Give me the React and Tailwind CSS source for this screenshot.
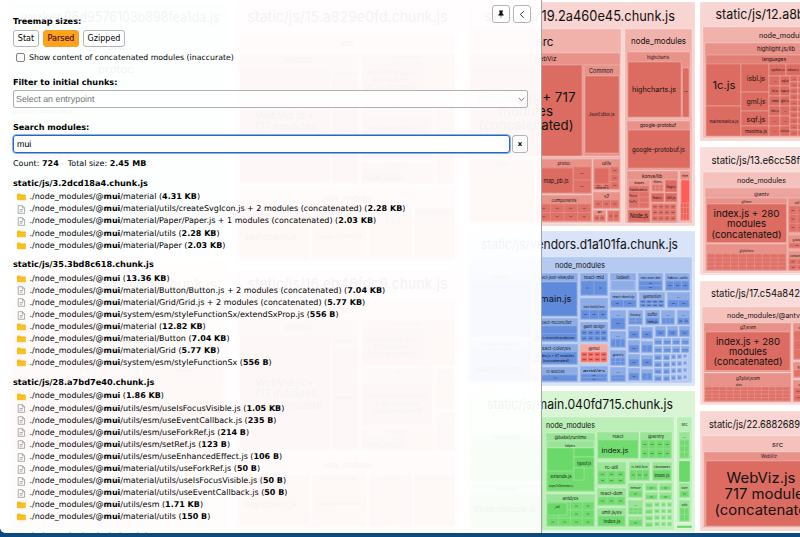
import React from 'react';

const RED = ['#f8d5d2', '#f1b2ac', '#e8928a', '#dc6c61'];
const PINK = ['#f9dcda', '#f5c1bd', '#eda39d', '#dc6c61'];
const BLUE = ['#d9e3f9', '#b5c9f1', '#8eace6', '#5f89da'];
const GREEN = ['#daf5d6', '#bceeb7', '#9ae497', '#6ad969'];
const TEAL = ['#d8f3ea', '#c8eee4', '#b4e6da', '#a0dfd0'];

const Box = ({ f, x2, y2, x, y }) => (
  <rect x={x} y={y} width={x2 - x} height={y2 - y} fill={f} stroke="#ffffff" strokeOpacity="0.3" strokeWidth="0.8" />
);

const Label = ({ x, y, s, w, start, children }) => (
  <text
    x={x}
    y={y}
    fontSize={s}
    textAnchor={start ? 'start' : 'middle'}
    textLength={w}
    lengthAdjust="spacingAndGlyphs"
    fill="#111"
  >
    {children}
  </text>
);

// A package with a small caption and a grid of leaf modules below it.
const Pack = ({ pal, x, y, x2, y2, label, w, s = 4, head = 8, cols = 2, rows = 1, dots = true }) => {
  const cells = [];
  const cw = (x2 - x - 2) / cols;
  const ch = (y2 - y - head - 1) / rows;
  for (let r = 0; r < rows; r++) {
    for (let c = 0; c < cols; c++) {
      const cx = x + 1 + c * cw;
      const cy = y + head + r * ch;
      cells.push(
        <g key={r + '-' + c}>
          <rect x={cx + 0.3} y={cy + 0.3} width={cw - 0.7} height={ch - 0.7} fill={pal[3]} opacity="0.85" />
          {dots && cw > 5 && ch > 3 && (
            <rect x={cx + cw / 2 - 1.5} y={cy + ch / 2 - 0.3} width="3" height="0.6" fill="#000" opacity="0.5" />
          )}
        </g>
      );
    }
  }
  return (
    <g>
      <Box f={pal[2]} x={x} y={y} x2={x2} y2={y2} />
      {cells}
      {label && (
        <Label x={(x + x2) / 2} y={y + head - 2} s={s} w={w}>
          {label}
        </Label>
      )}
    </g>
  );
};

const Chunk15 = ({ title, dy }) => (
  <g transform={`translate(0 ${dy})`}>
    <Box f={RED[0]} x={235} y={2} x2={458} y2={263} />
    <Label x={347.5} y={22} s={15} w={200}>{title}</Label>
    <Box f={RED[1]} x={238} y={33} x2={455} y2={185} />
    <Label x={347} y={46} s={9} w={13}>src</Label>
    <Box f={RED[2]} x={239} y={53} x2={359} y2={184} />
    <Label x={299} y={63} s={8} w={29}>WebViz</Label>
    <Box f={RED[3]} x={240} y={68} x2={330} y2={183} />
    <Label x={285} y={119} s={10} w={59}>WebViz.js +</Label>
    <Label x={285} y={130} s={10} w={63}>717 modules</Label>
    <Label x={285} y={141.500} s={10} w={76}>(concatenated)</Label>
    <Box f={RED[2]} x={331} y={68} x2={358} y2={183} />
    <Label x={345} y={76} s={5} w={21}>Common</Label>
    <Box f={RED[3]} x={332} y={80} x2={358} y2={183} />
    <Label x={345} y={132} s={4} w={22}>JsonEditor.js</Label>
    <Pack pal={RED} x={361} y={53} x2={455} y2={99} label="components" w={26} cols={5} rows={2} dots={false} />
    <Box f={RED[3]} x={362} y={61} x2={424} y2={98} />
    <Label x={391} y={74.500} s={6.500} w={50}>WebvizPlay.js +</Label>
    <Label x={391} y={82} s={6.500} w={37}>43 modules</Label>
    <Label x={391} y={89} s={6.500} w={49}>(concatenated)</Label>
    <Box f={RED[2]} x={361} y={101} x2={433} y2={160} />
    <Label x={397} y={107} s={4} w={6}>ui</Label>
    <Box f={RED[3]} x={362} y={115} x2={432} y2={158} />
    <Label x={397} y={131} s={6.500} w={59}>esGeneralPanel.js</Label>
    <Label x={397} y={138.500} s={6.500} w={43}>+ 60 modules</Label>
    <Label x={397} y={146} s={6.500} w={49}>(concatenated)</Label>
    <Pack pal={RED} x={436} y={101} x2={455} y2={143} label="utils" cols={2} rows={4} />
    <Pack pal={RED} x={436} y={145} x2={455} y2={184} label="v2" cols={2} rows={3} />
    <Pack pal={RED} x={361} y={161} x2={433} y2={184} label="protoc" w={13} cols={4} dots={false} />
    <Box f={RED[3]} x={362} y={169} x2={406} y2={183} />
    <Label x={384} y={180} s={7} w={35}>map_pb.js</Label>
    <Box f={RED[1]} x={238} y={188} x2={455} y2={261} />
    <Label x={347} y={201} s={7.500} w={49}>node_modules</Label>
    <Pack pal={RED} x={239} y={207} x2={310} y2={259} label="highcharts" cols={1} dots={false} />
    <Label x={271} y={239.500} s={7.500} w={51}>highcharts.js</Label>
    <Pack pal={RED} x={312} y={207} x2={367} y2={259} label="google-protobuf" w={35} cols={1} dots={false} />
    <Label x={340} y={238} s={5} w={43}>google-protobuf.js</Label>
    <Pack pal={RED} x={369} y={207} x2={412} y2={259} label="konva/lib" w={18} cols={3} rows={5} />
    <Pack pal={RED} x={414} y={207} x2={455} y2={259} label="@material-ui/core" w={32} cols={3} rows={4} />
  </g>
);

const Treemap = () => (
  <svg width="800" height="532" viewBox="0 0 800 532" className="block" fontFamily='Inter, "Liberation Sans", sans-serif'>
    <Box f={TEAL[0]} x={8} y={2} x2={227} y2={252} />
    <Label x={120} y={22} s={14} w={199}>worker.95d9576103b898fea1da.js</Label>
    <Box f={TEAL[1]} x={11} y={31} x2={224} y2={249} />
    <Label x={116} y={50} s={11} w={18}>src</Label>
    <Label x={116} y={73} s={10} w={36}>protoc</Label>
    <Label x={43} y={88} s={5} w={24}>planning</Label>
    <Label x={104} y={97} s={5} w={20}>hmi_pb.js</Label>
    <Label x={174} y={97} s={5} w={27}>map_pb.js</Label>
    <Label x={43} y={113} s={5} w={60}>planning_debug_pb.js</Label>
    <Label x={42} y={158} s={5} w={58}>perception_pb.js</Label>

    <Box f={PINK[0]} x={8} y={260} x2={228} y2={530} />
    <Label x={116} y={289} s={14} w={202}>static/js/14.28da4cca.chunk.js</Label>
    <Box f={PINK[1]} x={11} y={300} x2={225} y2={528} />
    <Box f={PINK[2]} x={13} y={322} x2={140} y2={452} />
    <Label x={78} y={402} s={10} w={76}>(concatenated)</Label>
    <Pack pal={RED} x={143} y={366} x2={223} y2={450} label="components" cols={4} rows={5} />
    <Label x={116} y={470} s={7.500} w={49}>node_modules</Label>

    <Chunk15 title="static/js/15.a829e0fd.chunk.js" dy={0} />
    <Chunk15 title="static/js/16.eb46fdc9.chunk.js" dy={267} />

    <Box f={RED[0]} x={466} y={2} x2={695} y2={226} />
    <Label start x={484} y={20.500} s={14} w={56}>static/js/</Label>
    <Label start x={541.500} y={20.500} s={14} w={133.500}>19.2a460e45.chunk.js</Label>
    <Box f={RED[1]} x={469} y={29} x2={621} y2={223} />
    <Label x={545} y={45.500} s={11} w={17}>src</Label>
    <Box f={RED[2]} x={470} y={53} x2={620} y2={156} />
    <Label x={545} y={61} s={6.500} w={23}>WebViz</Label>
    <Box f={RED[3]} x={470} y={65} x2={582} y2={156} />
    <Label x={526} y={102} s={13} w={99}>WebViz.js + 717</Label>
    <Label x={526} y={116} s={13} w={54}>modules</Label>
    <Label x={526} y={129.500} s={13} w={95}>(concatenated)</Label>
    <Box f={RED[2]} x={584} y={65} x2={620} y2={156} />
    <Label x={601} y={72.800} s={6} w={24}>Common</Label>
    <Box f={RED[3]} x={585} y={76} x2={619} y2={153} />
    <Label x={601.500} y={116} s={4.200} w={26}>JsonEditor.js</Label>
    <Pack pal={RED} x={470} y={159} x2={535} y2={222} label="panels" cols={3} rows={4} />
    <Pack pal={RED} x={536} y={159} x2={592} y2={194} label="protoc" w={13} s={4.500} cols={3} rows={2} />
    <Box f={RED[3]} x={537} y={168} x2={573} y2={193} />
    <Label x={556} y={183} s={6} w={25}>map_pb.js</Label>
    <Pack pal={RED} x={536} y={195} x2={592} y2={222} label="components" w={25} s={4.500} head={9} cols={4} rows={2} />
    <Pack pal={RED} x={593} y={159} x2={620} y2={190} label="utils" w={9} s={4.500} cols={3} rows={3} />
    <Box f={RED[3]} x={594} y={168} x2={609} y2={184} />
    <Label x={602} y={188.500} s={3} w={13}>container.js</Label>
    <Pack pal={RED} x={593} y={192} x2={620} y2={209} label="v2" w={5} s={4.500} cols={3} />
    <Pack pal={RED} x={593} y={210} x2={606} y2={222} label="api" s={3} head={5} cols={2} />
    <Pack pal={RED} x={607} y={210} x2={620} y2={222} head={1} cols={2} />

    <Box f={RED[1]} x={625} y={29} x2={692} y2={223} />
    <Label x={658.500} y={44} s={8.500} w={55}>node_modules</Label>
    <Box f={RED[2]} x={627} y={52} x2={690} y2={118} />
    <Label x={658} y={59} s={4.500} w={22}>highcharts</Label>
    <Box f={RED[3]} x={628} y={62} x2={681} y2={117} />
    <Label x={654} y={92} s={7.200} w={44}>highcharts.js</Label>
    <Box f={RED[3]} x={682.500} y={68} x2={689} y2={117} />
    <Label x={686} y={92} s={5}>...</Label>
    <Box f={RED[2]} x={627} y={121} x2={690} y2={170} />
    <Label x={658} y={127} s={5} w={36}>google-protobuf</Label>
    <Box f={RED[3]} x={628} y={130} x2={690} y2={168} />
    <Label x={658.500} y={151.500} s={6.500} w={53}>google-protobuf.js</Label>
    <Box f={RED[2]} x={627} y={171} x2={678} y2={223} />
    <Label x={652} y={178} s={5} w={20}>konva/lib</Label>
    <Pack pal={RED} x={628} y={180} x2={650} y2={209} label="shapes" w={10} s={3} head={6} cols={2} rows={4} dots={false} />
    <Label x={638} y={190.500} s={3} w={18}>Transformer.js</Label>
    <Label x={633} y={197} s={3} w={8}>Text.js</Label>
    <Label x={633} y={203} s={3} w={8}>TextP.js</Label>
    <Box f={RED[3]} x={628} y={210} x2={650} y2={222} />
    <Label x={639} y={217.500} s={5.500} w={18}>Node.js</Label>
    <Pack pal={RED} x={651} y={180} x2={664} y2={192} label="filters" s={3} head={5} cols={3} rows={2} />
    <Box f={RED[3]} x={665} y={180} x2={677} y2={192} />
    <Label x={671} y={187.500} s={3} w={9}>Stage.js</Label>
    <Box f={RED[3]} x={651} y={193} x2={664} y2={202} />
    <Label x={657} y={198.500} s={3} w={9}>Shape.js</Label>
    <Box f={RED[3]} x={665} y={193} x2={677} y2={202} />
    <Label x={671} y={198.500} s={3.500} w={9}>Util.js</Label>
    <Pack pal={RED} x={651} y={203} x2={677} y2={222} head={1} cols={4} rows={3} />
    <Pack pal={['', '', '#ee9088', '#f5544c']} x={680} y={181} x2={690} y2={221} head={1} cols={3} rows={6} dots={false} />
    <Box f={RED[2]} x={680} y={171} x2={690} y2={180} />
    <Label x={685} y={177} s={3} w={6}>three</Label>
    <Box f="#ff5d56" x={681} y={180} x2={689.500} y2={203} />

    <Box f={BLUE[0]} x={466} y={231} x2={695} y2={386} />
    <Label x={579.500} y={249} s={13} w={197}>static/js/vendors.d1a101fa.chunk.js</Label>
    <Box f={BLUE[1]} x={468} y={257} x2={692} y2={383} />
    <Label x={580} y={268} s={7.500} w={50}>node_modules</Label>
    <Pack pal={BLUE} x={469} y={273} x2={532} y2={338} label="moment" w={13} cols={1} />
    <Pack pal={BLUE} x={469} y={340} x2={532} y2={382} label="moment-timezone" w={36} cols={1} dots={false} />
    <Label x={499} y={371.500} s={8} w={47}>latest.json</Label>
    <Box f={BLUE[2]} x={533} y={273} x2={578} y2={317} />
    <Label x={556} y={279} s={4.500} w={36}>react-json-view/dist</Label>
    <Box f={BLUE[3]} x={534} y={282} x2={577} y2={316} />
    <Label x={556} y={302} s={8.500} w={31}>main.js</Label>
    <Pack pal={BLUE} x={533} y={318} x2={578} y2={342} label="react-reconciler" w={32} s={4.500} cols={1} rows={2} dots={false} />
    <Label x={556} y={338.500} s={3} w={37}>react-reconciler.production</Label>
    <Pack pal={BLUE} x={533} y={344} x2={578} y2={365} label="react-color/es" w={30} s={4.500} cols={1} dots={false} />
    <Label x={556} y={357} s={3.500} w={36}>index.js + 47 modules</Label>
    <Label x={556} y={361.500} s={3.500} w={26}>(concatenated)</Label>
    <Pack pal={BLUE} x={533} y={367} x2={578} y2={382} label="rc-select/es" w={18} s={4} cols={1} />
    <Pack pal={BLUE} x={580} y={273} x2={608} y2={296} label="react-mid" w={20} s={4.500} cols={2} rows={1} />
    <Pack pal={BLUE} x={580} y={298} x2={608} y2={320} label="react-dnd/dist/esm" w={21} s={3.500} head={12} cols={3} rows={1} />
    <Pack pal={BLUE} x={580} y={322} x2={608} y2={342} label="@ant-design" w={21} s={4} cols={4} rows={2} />
    <Pack pal={['', '', '#f2aaa5', '#ef5a52']} x={580} y={344} x2={608} y2={363} label="@mui" w={11} s={4} cols={4} rows={2} />
    <Pack pal={BLUE} x={580} y={366} x2={608} y2={382} label="antd/es" w={22} s={3.500} cols={1} rows={2} />
    <Pack pal={BLUE} x={610} y={273} x2={636} y2={291} label="lodash" w={13} s={4.500} head={8} cols={1} dots={false} />
    <Box f={BLUE[2]} x={611} y={280.500} x2={635} y2={290} />
    <Pack pal={BLUE} x={638} y={273} x2={663} y2={291} label="react-router-dom" w={20} s={3} cols={1} rows={2} />
    <Pack pal={BLUE} x={665} y={273} x2={690} y2={291} label="fabric-utils" w={20} s={3} cols={3} />
    <Pack pal={BLUE} x={610} y={292} x2={637} y2={308} label="react-dom/cjs" w={22} s={3.500} cols={2} />
    <Pack pal={BLUE} x={639} y={292} x2={665} y2={308} label="@emotion" w={18} s={4} cols={4} rows={2} />
    <Pack pal={BLUE} x={667} y={292} x2={690} y2={308} label="..." cols={2} />
    <Pack pal={BLUE} x={610} y={310} x2={626} y2={330} label="..." cols={1} />
    <Pack pal={BLUE} x={628} y={310} x2={643} y2={325} label="history" w={10} s={3} cols={2} rows={2} />
    <Pack pal={BLUE} x={645} y={310} x2={660} y2={325} label="buffer" w={10} s={4} cols={1} dots={false} />
    <Label x={652.500} y={322.500} s={3.500} w={10}>index.js</Label>
    <Pack pal={BLUE} x={661} y={310} x2={675} y2={325} label="..." cols={3} />
    <Pack pal={BLUE} x={677} y={310} x2={690} y2={325} label="..." cols={2} />
    <Pack pal={BLUE} x={610} y={331} x2={626} y2={348} label="..." cols={3} />
    <Pack pal={BLUE} x={610} y={350} x2={626} y2={366} label="@sentry" w={11} s={3.500} cols={3} rows={2} />
    <Pack pal={BLUE} x={610} y={367} x2={626} y2={382} label="..." cols={1} rows={2} />
    {[326, 340, 354, 368].map((y, i) => (
      <g key={y}>
        <Pack pal={BLUE} x={628} y={y} x2={640} y2={y + 13} head={5} cols={1} />
        <Pack pal={BLUE} x={641} y={y + 1} x2={653} y2={y + 13} head={4} cols={i % 2 ? 2 : 1} />
      </g>
    ))}
    {[655, 667, 679].map((x) => (
      <Pack key={x} pal={BLUE} x={x} y={326} x2={x + 11} y2={337} head={4} cols={1} />
    ))}
    {[654, 663, 672, 681].map((x) => (
      <g key={x}>
        <Pack pal={BLUE} x={x} y={338} x2={x + 8.500} y2={345} head={2.500} cols={1} dots={false} />
        <Pack pal={BLUE} x={x} y={346} x2={x + 8.500} y2={353} head={2.500} cols={1} dots={false} />
      </g>
    ))}
    {[354, 361, 368, 375].map((y) => (
      <g key={y}>
        <Pack pal={BLUE} x={654} y={y} x2={662} y2={y + 6.500} head={2} cols={1} dots={false} />
        <Pack pal={BLUE} x={663} y={y} x2={670} y2={y + 6.500} head={2} cols={1} dots={false} />
        <Pack pal={BLUE} x={671} y={y} x2={676} y2={y + 5.500} head={1.500} cols={1} dots={false} />
        <Pack pal={BLUE} x={677} y={y} x2={682} y2={y + 5} head={1.500} cols={1} dots={false} />
        <Pack pal={BLUE} x={683} y={y} x2={687} y2={y + 4} head={1.200} cols={1} dots={false} />
      </g>
    ))}

    <Box f={GREEN[0]} x={466} y={391} x2={695} y2={532} />
    <Label x={580} y={409} s={13} w={186}>static/js/main.040fd715.chunk.js</Label>
    <Box f={GREEN[1]} x={468} y={417} x2={674} y2={530} />
    <Label x={570.500} y={427.500} s={7.500} w={49}>node_modules</Label>
    <Pack pal={GREEN} x={469} y={433} x2={543} y2={482} label="react-dom/cjs" cols={2} rows={2} />
    <Pack pal={GREEN} x={469} y={484} x2={543} y2={529} label="three/build" cols={1} dots={false} />
    <Label x={505} y={512} s={8} w={62}>three.module.js</Label>
    <Pack pal={GREEN} x={546} y={433} x2={595} y2={492} label="@babel/runtime" w={32} s={4.500} head={8} cols={1} dots={false} />
    <Box f={GREEN[2]} x={547} y={441} x2={594} y2={448} />
    <Box f={GREEN[3]} x={547} y={448} x2={574} y2={471} />
    <Box f={GREEN[3]} x={574} y={448} x2={594} y2={457} />
    <Box f={GREEN[3]} x={574} y={457} x2={594} y2={468} />
    <Box f={GREEN[3]} x={574} y={468} x2={584} y2={480} />
    <Label x={570} y={446.500} s={3.500} w={10}>helpers</Label>
    <Label x={561} y={477.500} s={4.500} w={21}>extends.js</Label>
    <Label x={584} y={464.500} s={4} w={14}>typeof.js</Label>
    <Label x={561} y={487} s={3} w={24}>asyncToGenerator.js</Label>
    <Pack pal={GREEN} x={546} y={494} x2={595} y2={527} label="antd/es" w={16} s={4.500} cols={4} rows={3} />
    <Box f={GREEN[3]} x={547} y={503} x2={567} y2={515} />
    <Label x={557} y={508} s={3}>_util</Label>
    <Pack pal={GREEN} x={597} y={432} x2={639} y2={459} label="react" w={11} s={4.500} cols={1} dots={false} />
    <Label x={615} y={453} s={6.500} w={27}>index.js</Label>
    <Pack pal={GREEN} x={640} y={432} x2={672} y2={459} label="@sentry" w={16} s={4.500} cols={4} rows={2} />
    <Pack pal={GREEN} x={597} y={462} x2={626} y2={485} label="rc-util" w={13} s={4.500} head={9} cols={3} rows={2} />
    <Pack pal={GREEN} x={629} y={462} x2={650} y2={481} label="rc-field-form" w={16} s={3} cols={3} />
    <Pack pal={GREEN} x={652} y={462} x2={672} y2={481} label="classnames" w={16} s={3} cols={1} dots={false} />
    <Label x={662} y={477} s={4} w={15}>index.js</Label>
    <Pack pal={GREEN} x={597} y={488} x2={626} y2={506} label="react-dom" w={22} s={4.500} head={9} cols={3} />
    <Pack pal={GREEN} x={597} y={508} x2={626} y2={527} label="omit.js/es" w={20} s={4.500} cols={1} dots={false} />
    <Label x={612} y={523} s={4.500} w={17}>index.js</Label>
    <Pack pal={GREEN} x={628} y={483} x2={643} y2={498} label="memoize" w={10} s={3} cols={1} />
    <Pack pal={GREEN} x={628} y={500} x2={643} y2={515} label="..." cols={3} rows={2} />
    <Pack pal={GREEN} x={628} y={516} x2={643} y2={527} head={4} cols={1} />
    <Pack pal={GREEN} x={645} y={483} x2={658} y2={491} head={3} cols={1} />
    <Pack pal={GREEN} x={659} y={483} x2={672} y2={491} head={3} cols={1} />
    <Pack pal={GREEN} x={645} y={492} x2={658} y2={500} head={3} cols={1} />
    <Pack pal={GREEN} x={659} y={492} x2={672} y2={500} head={3} cols={1} />
    {[502, 508.500, 515, 521.500].map((y) => (
      <g key={y}>
        <Pack pal={GREEN} x={645} y={y} x2={653} y2={y + 5.800} head={2} cols={1} dots={false} />
        <Pack pal={GREEN} x={654} y={y} x2={660} y2={y + 5} head={1.500} cols={1} dots={false} />
        <Pack pal={GREEN} x={661} y={y} x2={666} y2={y + 5} head={1.500} cols={1} dots={false} />
        <Pack pal={GREEN} x={667} y={y} x2={672} y2={y + 5} head={1.500} cols={1} dots={false} />
      </g>
    ))}
    <Box f={GREEN[1]} x={677} y={417} x2={692} y2={522} />
    <Label x={684.500} y={426} s={4} w={6}>src</Label>
    <Pack pal={GREEN} x={679} y={432} x2={690} y2={459} label="..." cols={2} rows={3} />
    <Box f={GREEN[3]} x={679} y={461} x2={690} y2={482} />
    <Pack pal={GREEN} x={679} y={483} x2={690} y2={498} label="store" w={6} s={3} cols={1} />
    <Pack pal={GREEN} x={679} y={500} x2={690} y2={522} label="utils" w={6} s={3} cols={2} rows={2} />
    <Box f={GREEN[3]} x={677} y={525.500} x2={692} y2={528} />

    <Box f={RED[0]} x={700} y={2} x2={830} y2={141} />
    <Label start x={715.500} y={18.500} s={13} w={89}>static/js/12.a8b</Label>
    <Box f={RED[1]} x={703} y={27} x2={830} y2={138} />
    <Label start x={759} y={38} s={7.200} w={50}>node_modules</Label>
    <Box f={RED[2]} x={705} y={43} x2={830} y2={137} />
    <Label start x={757} y={51} s={5.500} w={38}>highlight.js/lib</Label>
    <Box f="#e27f76" x={706} y={55} x2={830} y2={136} />
    <Label start x={762} y={61.300} s={5} w={24}>languages</Label>
    <Box f={RED[3]} x={706} y={64} x2={741} y2={106} />
    <Label x={724} y={89} s={10.500} w={23}>1c.js</Label>
    <Box f={RED[3]} x={706} y={106} x2={741} y2={136} />
    <Label x={724} y={122.500} s={4} w={29}>mathematica.js</Label>
    <Box f={RED[3]} x={741} y={64} x2={769} y2={92} />
    <Label x={756} y={81} s={7.200} w={18.500}>isbl.js</Label>
    <Box f={RED[3]} x={741} y={92} x2={769} y2={111} />
    <Label x={756} y={104} s={7} w={19}>gml.js</Label>
    <Box f={RED[3]} x={741} y={111} x2={769} y2={126} />
    <Label x={756} y={121.500} s={7} w={19}>sqf.js</Label>
    <Box f={RED[3]} x={741} y={126} x2={769} y2={136} />
    <Label x={756} y={132.500} s={4.500} w={22}>maxima.js</Label>
    <Box f={RED[3]} x={769} y={64} x2={786} y2={76} />
    <Label x={778} y={71} s={3} w={13}>python.js</Label>
    <Box f={RED[3]} x={786} y={64} x2={802} y2={76} />
    <Label x={793} y={71} s={3} w={11}>arduino.js</Label>
    {['...', 'lsl.js', 'stata', 'tex.js', '...', '...'].map((t, i) => (
      <g key={i}>
        <Box f={RED[3]} x={769} y={76 + i * 10} x2={780} y2={86 + i * 10} />
        <Label x={775} y={82 + i * 10} s={3}>{t}</Label>
        <Box f={RED[3]} x={780} y={76 + i * 10} x2={790} y2={86 + i * 10} />
        <Label x={785} y={82 + i * 10} s={3}>{['sql.js', 'cpp.js', 'glsl.js', '...', '...', 'nsis.js'][i]}</Label>
      </g>
    ))}
    {[0, 1, 2, 3, 4, 5, 6, 7, 8, 9].map((i) => (
      <g key={i}>
        <Box f={RED[3]} x={790} y={76 + i * 6} x2={798} y2={82 + i * 6} />
        <Box f={RED[3]} x={798} y={76 + i * 6} x2={806} y2={82 + i * 6} />
        <Label x={794} y={80 + i * 6} s={3}>...</Label>
      </g>
    ))}

    <Box f={PINK[0]} x={700} y={147} x2={830} y2={275} />
    <Label start x={711.500} y={163.500} s={10.800} w={88.500}>static/js/13.e6cc58f</Label>
    <Box f={PINK[1]} x={703} y={172} x2={830} y2={273} />
    <Label start x={737} y={183} s={7.200} w={49}>node_modules</Label>
    <Box f={PINK[2]} x={705} y={188} x2={830} y2={271} />
    <Label x={761.500} y={195.500} s={5} w={15}>@antv</Label>
    <Box f={RED[2]} x={706} y={198} x2={787} y2={243} />
    <Label x={746.500} y={202.500} s={3.500} w={10}>g2/esm</Label>
    <Box f={RED[3]} x={706.500} y={204} x2={786.500} y2={242.500} />
    <Label x={746.500} y={216.500} s={9.500} w={66}>index.js + 280</Label>
    <Label x={746.500} y={227} s={9.500} w={39}>modules</Label>
    <Label x={746.500} y={237.500} s={9.500} w={70}>(concatenated)</Label>
    <Pack pal={RED} x={706} y={244} x2={787} y2={271} label="g2plot/esm" w={14} s={3.500} head={10} cols={10} rows={4} dots={false} />
    <Pack pal={RED} x={788} y={198} x2={806} y2={233} label="util" s={3.500} cols={2} rows={3} />
    <Pack pal={RED} x={788} y={235} x2={806} y2={249} label="g-base" w={9} s={3} cols={1} />
    <Pack pal={RED} x={788} y={251} x2={806} y2={271} label="component" w={14} s={3} cols={2} rows={2} />

    <Box f={PINK[0]} x={700} y={281} x2={830} y2={405} />
    <Label start x={711} y={297} s={10.800} w={89}>static/js/17.c54a842</Label>
    <Box f={PINK[1]} x={702} y={307} x2={830} y2={403} />
    <Label start x={727} y={318} s={7.200} w={73}>node_modules/@antv</Label>
    <Box f={RED[2]} x={704} y={323} x2={791} y2={372} />
    <Label x={748} y={329} s={4.500} w={16}>g2/esm</Label>
    <Box f={RED[3]} x={705.500} y={332} x2={790} y2={370.500} />
    <Label x={748} y={344.500} s={9.500} w={64}>index.js + 280</Label>
    <Label x={748} y={354.800} s={9.500} w={38}>modules</Label>
    <Label x={748} y={365} s={9.500} w={69}>(concatenated)</Label>
    <Pack pal={RED} x={704} y={373} x2={791} y2={402} head={14} cols={12} rows={4} dots={false} />
    <Label x={748} y={380} s={4.500} w={24}>g2plot/esm</Label>
    <Label x={739} y={386} s={3} w={6}>plots</Label>
    <Pack pal={RED} x={793} y={323} x2={812} y2={360} label="comp" s={3} cols={1} rows={3} />
    <Pack pal={RED} x={793} y={362} x2={812} y2={378} label="g-base" w={10} s={3} cols={1} />
    <Pack pal={RED} x={793} y={380} x2={812} y2={402} label="coord" s={3} cols={2} rows={2} />

    <Box f={RED[0]} x={700} y={411} x2={830} y2={531} />
    <Label start x={709} y={427.500} s={10.800} w={91}>static/js/22.6882689</Label>
    <Box f={PINK[1]} x={702} y={436} x2={830} y2={528} />
    <Label x={777.500} y={447} s={7} w={11}>src</Label>
    <Box f={RED[2]} x={704} y={452} x2={830} y2={527} />
    <Label x={769} y={458} s={4.500} w={16}>WebViz</Label>
    <Box f={RED[3]} x={706} y={461} x2={830} y2={526} />
    <Label start x={726.500} y={483} s={14} w={69}>WebViz.js</Label>
    <Label start x={724.500} y={499} s={14} w={87}>717 modules</Label>
    <Label start x={714.500} y={515} s={14} w={107}>(concatenated)</Label>
  </svg>
);

const FolderIcon = () => (
  <svg width="9" height="8" viewBox="0 0 9 8" className="shrink-0">
    <path d="M0 1.200Q0 .5.700.5h2.500l1 1h4q.6 0 .6.600v4.600q0 .6-.6.600H.6Q0 7.300 0 6.700z" fill="#fbbf24" />
    <path d="M0 2.400h8.800" stroke="#f5ad14" strokeWidth=".5" />
  </svg>
);

const FileIcon = () => (
  <svg width="9" height="9" viewBox="0 0 9 9" className="shrink-0" fill="none" stroke="#8a8a8a" strokeWidth=".7">
    <path d="M1.200.7h4.300l2.100 2.100v5.500H1.200z" />
    <path d="M5.400.8v2.100h2.100M2.700 4.600h3.300M2.700 6.200h2.600" />
  </svg>
);

// Entries are [is a folder, path after "@mui", size].
const groups = [
  {
    name: 'static/js/3.2dcd18a4.chunk.js',
    items: [
      [1, '/material', '4.31 KB'],
      [0, '/material/utils/createSvgIcon.js + 2 modules (concatenated)', '2.28 KB'],
      [0, '/material/Paper/Paper.js + 1 modules (concatenated)', '2.03 KB'],
      [1, '/material/utils', '2.28 KB'],
      [1, '/material/Paper', '2.03 KB'],
    ],
  },
  {
    name: 'static/js/35.3bd8c618.chunk.js',
    items: [
      [1, '', '13.36 KB'],
      [0, '/material/Button/Button.js + 2 modules (concatenated)', '7.04 KB'],
      [0, '/material/Grid/Grid.js + 2 modules (concatenated)', '5.77 KB'],
      [0, '/system/esm/styleFunctionSx/extendSxProp.js', '556 B'],
      [1, '/material', '12.82 KB'],
      [1, '/material/Button', '7.04 KB'],
      [1, '/material/Grid', '5.77 KB'],
      [1, '/system/esm/styleFunctionSx', '556 B'],
    ],
  },
  {
    name: 'static/js/28.a7bd7e40.chunk.js',
    items: [
      [1, '', '1.86 KB'],
      [0, '/utils/esm/useIsFocusVisible.js', '1.05 KB'],
      [0, '/utils/esm/useEventCallback.js', '235 B'],
      [0, '/utils/esm/useForkRef.js', '214 B'],
      [0, '/utils/esm/setRef.js', '123 B'],
      [0, '/utils/esm/useEnhancedEffect.js', '106 B'],
      [0, '/material/utils/useForkRef.js', '50 B'],
      [0, '/material/utils/useIsFocusVisible.js', '50 B'],
      [0, '/material/utils/useEventCallback.js', '50 B'],
      [1, '/utils/esm', '1.71 KB'],
      [1, '/material/utils', '150 B'],
    ],
  },
  { name: 'static/js/36.fe7b5d4d.chunk.js', items: [] },
];

const button = 'flex items-center justify-center rounded-[3px] border border-[#b4b4b4] bg-white';

const Sidebar = () => (
  <aside className="absolute top-0 left-0 h-[533px] w-[542px] overflow-hidden border-r border-[#a3a3a3] bg-white/95 pt-[15px] pr-[10px] pl-[13px] text-[8px] leading-[12px] text-black [text-rendering:geometricPrecision]">
    <div className="flex h-[15px] items-start justify-between">
      <b className="block text-[8.15px]">Treemap sizes:</b>
      <div className="-mt-[10px] flex gap-[3px]">
        <button className={`${button} h-[18px] w-[18px]`}>
          <svg width="8" height="9" viewBox="0 0 8 9">
            <path d="M2 .5h4v.8l-.6.3v2l1.300 1.200v.8H4.400L4 8.700l-.4-3.100H1.300v-.8l1.300-1.200v-2L2 1.300z" fill="#111" />
          </svg>
        </button>
        <button className={`${button} h-[18px] w-[18px]`}>
          <svg width="8" height="9" viewBox="0 0 8 9" fill="none" stroke="#333" strokeWidth="1">
            <path d="M5.800 1.200L2.300 4.500l3.500 3.300" />
          </svg>
        </button>
      </div>
    </div>
    <div className="flex gap-1">
      <button className={`${button} h-[17px] w-[26px]`}>Stat</button>
      <button className="flex h-[17px] w-[36px] items-center justify-center rounded-[3px] border border-[#eaa23a] bg-[#ffa31a] text-[#4d1030] [-webkit-text-stroke:0.2px_#4d1030]">
        Parsed
      </button>
      <button className={`${button} h-[17px] w-[42px]`}>Gzipped</button>
    </div>
    <div className="mt-[5px] flex h-3 items-center gap-1 pl-[3px]">
      <span className="mb-[2px] h-[9px] w-[9px] rounded-[2px] border border-[#808080] bg-white" />
      <span className="text-[7.8px]">Show content of concatenated modules (inaccurate)</span>
    </div>
    <b className="mt-3 block text-[8.15px]">Filter to initial chunks:</b>
    <div className="mt-[2px] flex h-[18px] w-[515px] items-center justify-between rounded-[2px] border border-[#b0b0b0] bg-white/70 px-[2px] font-['Liberation_Sans',sans-serif] text-[8.9px] text-[#757575]">
      <span>Select an entrypoint</span>
      <svg width="7" height="5" viewBox="0 0 7 5" fill="none" stroke="#666" strokeWidth=".9">
        <path d="M.8 1l2.700 2.600L6.200 1" />
      </svg>
    </div>
    <b className="mt-[13px] block text-[8.15px]">Search modules:</b>
    <div className="mt-[2px] flex gap-[2px]">
      <div className="flex h-[18px] w-[497px] items-center rounded-[3px] border-[1.5px] border-[#2166cf] bg-white px-[3px] font-['Liberation_Sans',sans-serif] text-[8.9px] outline-[0.5px] outline-[#2166cf]/50">
        mui
      </div>
      <button className={`${button} h-[18px] w-[16px] text-[7px] font-bold`}>x</button>
    </div>
    <div className="mt-[5px] flex gap-[9px]">
      <span>Count: <b>724</b></span>
      <span>Total size: <b>2.45 MB</b></span>
    </div>
    <div className="mt-[7px]">
      {groups.map((g) => (
        <section key={g.name} className="mb-[6.7px]">
          <b className="block text-[8.2px]">{g.name}</b>
          <ul className="mt-[2.3px]">
            {g.items.map(([folder, path, size], i) => (
              <li key={i} className="flex h-[12.1px] items-center gap-[3.5px] pl-[4px] leading-[12.1px] whitespace-nowrap">
                {folder ? <FolderIcon /> : <FileIcon />}
                <span>
                  ./node_modules/@<b>mui</b>{path} (<b>{size}</b>)
                </span>
              </li>
            ))}
          </ul>
        </section>
      ))}
    </div>
  </aside>
);

export default function App() {
  return (
    <div className="h-[537px] w-[800px] overflow-hidden bg-[#0b4a80] font-['DejaVu_Sans','Verdana',sans-serif]">
      <div className="relative h-[533px] w-[800px] overflow-hidden rounded-bl-[6px] bg-white">
        <Treemap />
        <Sidebar />
      </div>
    </div>
  );
}
